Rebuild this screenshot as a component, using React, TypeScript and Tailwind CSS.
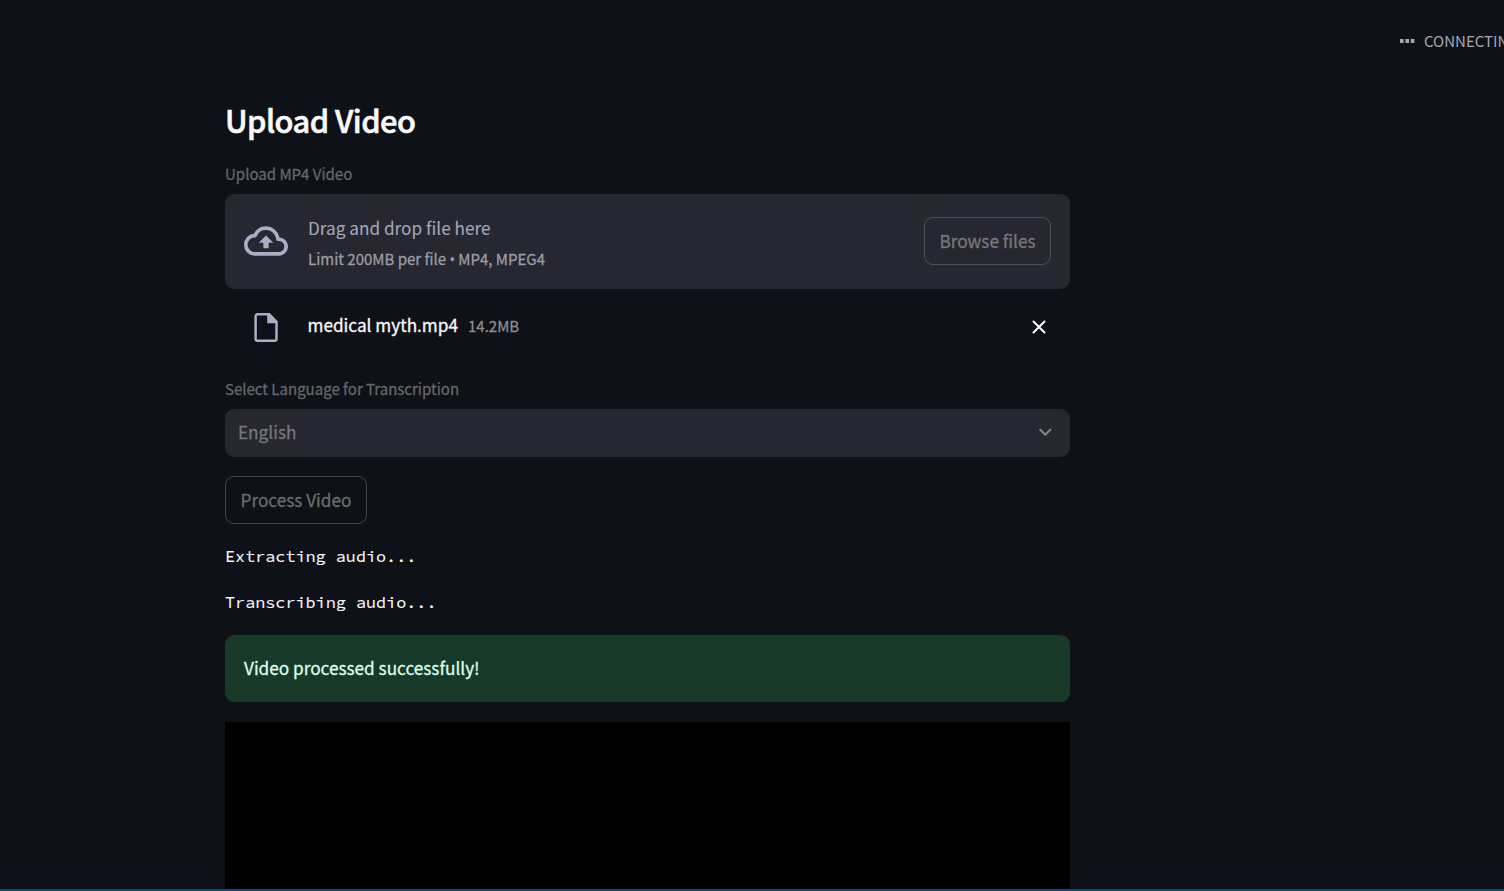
const logs = ["Extracting audio...", "Transcribing audio..."];

function CloudUpload() {
  return (
    <svg viewBox="0 0 24 24" className="h-11 w-11 shrink-0 fill-[#a9afc4]">
      <path d="M19.35 10.04A7.49 7.49 0 0 0 12 4C9.11 4 6.6 5.64 5.35 8.04A5.994 5.994 0 0 0 0 14c0 3.31 2.69 6 6 6h13c2.76 0 5-2.24 5-5 0-2.64-2.05-4.78-4.65-4.96zM19 18H6c-2.21 0-4-1.79-4-4 0-2.05 1.53-3.76 3.56-3.97l1.07-.11.5-.95A5.469 5.469 0 0 1 12 6c2.62 0 4.88 1.86 5.39 4.43l.3 1.5 1.53.11A2.98 2.98 0 0 1 22 15c0 1.65-1.35 3-3 3zM8 13h2.55v3h2.9v-3H16l-4-4z" />
    </svg>
  );
}

function FileIcon() {
  return (
    <svg viewBox="0 0 24 29" className="h-[29px] w-[24px] shrink-0 fill-none">
      <path d="M3.6 1.3H15.2L22.5 8.8V25.7a2 2 0 0 1-2 2H3.6a2 2 0 0 1-2-2V3.3a2 2 0 0 1 2-2z" className="stroke-[#a9afc4]" strokeWidth="2.5" />
      <path d="M13.2 1V10.2H23V8.6L15.4 1z" className="fill-[#a9afc4]" />
    </svg>
  );
}

export default function App() {
  return (
    <div className="flex h-[891px] w-full flex-col overflow-hidden bg-[#0e1117] font-['Noto_Sans_CJK_SC','Noto_Sans',sans-serif] text-[17.2px] text-[#fafafa] [-webkit-text-stroke:0.3px]">
      <header className="flex h-[84px] shrink-0 items-center justify-end overflow-hidden pb-[2px]">
        <div className="flex h-6 w-[104px] items-center whitespace-nowrap text-[15px] text-[#a3a8b4] [-webkit-text-stroke:0px]">
          <svg viewBox="0 0 14.5 4" className="mr-[9.5px] h-1 w-[14.5px] shrink-0 fill-[#a3a8b8]">
            <path d="M0 0h3.6v4H0zM5.4 0h3.6v4H5.4zM10.8 0h3.6v4h-3.6z" />
          </svg>
          <span>CONNECTING</span>
        </div>
      </header>

      <main className="ml-[225px] flex w-[845px] min-h-0 flex-1 flex-col">
        <h1 className="mt-[12px] h-12 shrink-0 text-[30.8px] leading-[48px] font-medium tracking-[-0.52px] [-webkit-text-stroke:0.6px]">Upload Video</h1>

        <label className="mt-[18px] h-6 shrink-0 text-[15.03px] leading-6 text-[#65676a]">Upload MP4 Video</label>
        <section className="mt-2 flex h-[95px] shrink-0 items-center rounded-[9px] bg-[#262730] px-[19px] pb-[1px]">
          <CloudUpload />
          <div className="ml-5 flex flex-col">
            <span className="h-[31px] leading-[34px] text-[#a3a8b8] [-webkit-text-stroke:0.1px]">Drag and drop file here</span>
            <span className="h-[30px] text-[15px] leading-[33px] text-[#9c9da1]">
              Limit 200MB per file<span className="font-['Noto_Sans'] tracking-[-0.4px]"> • </span>MP4, MPEG4
            </span>
          </div>
          <button className="ml-auto h-12 w-[127px] rounded-[9px] border border-[#4f5058] text-[#76777c]">Browse files</button>
        </section>

        <div className="mt-[19px] flex h-[38px] shrink-0 items-center pr-[23px] pl-[29px]">
          <FileIcon />
          <span className="ml-[29.5px] pb-[4px]">medical myth.mp4</span>
          <span className="ml-[10px] pb-[2px] text-[15px] text-[#8c8d91]">14.2MB</span>
          <button className="ml-auto">
            <svg viewBox="0 0 16 16" className="h-4 w-4 fill-none stroke-[#fafafa] stroke-2" strokeLinecap="round">
              <path d="M2.5 2.5l11 11M13.5 2.5l-11 11" />
            </svg>
          </button>
        </div>

        <label className="mt-[31px] h-6 shrink-0 text-[15.03px] leading-6 text-[#65676a]">Select Language for Transcription</label>
        <div className="mt-2 flex h-12 shrink-0 items-center justify-between rounded-[9px] bg-[#262730] pr-[18px] pb-[2px] pl-[13px] text-[#76777c]">
          <span>English</span>
          <svg viewBox="0 0 14 14" className="h-[14px] w-[14px] fill-none stroke-[#808187] stroke-[2.3]" strokeLinecap="round" strokeLinejoin="round">
            <path d="M2.3 4.8l5 5 5-5" />
          </svg>
        </div>

        <button className="mt-[19px] h-12 w-[142px] shrink-0 rounded-[9px] border border-[#42444a] text-[#6b6c70]">Process Video</button>

        <div className="mt-[19px] flex shrink-0 flex-col gap-[20px] font-['Source_Code_Pro','Noto_Sans_Mono','DejaVu_Sans_Mono',monospace] text-[16.8px] leading-[26px] [-webkit-text-stroke:0.1px]">
          {logs.map((line) => (
            <p key={line}>{line}</p>
          ))}
        </div>

        <div className="mt-[20px] flex h-[67px] shrink-0 items-center rounded-[9px] bg-[#173928] px-[19px] pb-[2px] text-[#dffde9]">
          Video processed successfully!
        </div>
        <div className="mt-5 flex-1 bg-black" />
      </main>
      <div className="h-[2px] shrink-0 bg-[#0b4a78]" />
    </div>
  );
}
